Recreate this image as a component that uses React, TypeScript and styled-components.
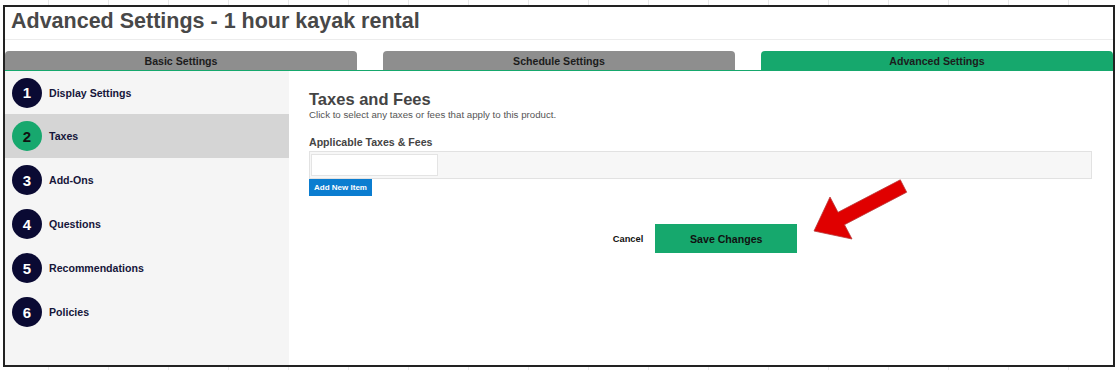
import React from 'react';
import styled, { createGlobalStyle } from 'styled-components';

const GlobalStyle = createGlobalStyle`
  html, body {
    margin: 0;
    padding: 0;
  }
  body {
    font-family: "Liberation Sans", Arial, sans-serif;
    background-color: #fff;
    background-image: repeating-linear-gradient(
      90deg,
      transparent 0 48px,
      #e9e9e9 48px 49px,
      transparent 49px 60px
    );
  }
`;

const Page = styled.div`
  padding: 5px 0 0 3px;
`;

const Frame = styled.div`
  position: relative;
  width: 1108px;
  height: 358px;
  border: 2px solid #222;
  background: #fff;
  display: flex;
  flex-direction: column;
  overflow: hidden;
`;

const Header = styled.div`
  padding: 2px 6px 5px;
  border-bottom: 1px solid #ececec;
`;

const Title = styled.h1`
  margin: 0;
  font-size: 21.5px;
  line-height: 25px;
  font-weight: bold;
  color: #484848;
`;

const Tabs = styled.div`
  display: flex;
  gap: 26px;
  margin-top: 11px;
  border-bottom: 1px solid #16a86d;
`;

const Tab = styled.div<{ $active?: boolean }>`
  flex: 1;
  height: 19px;
  border-radius: 4px 4px 0 0;
  background: ${({ $active }) => ($active ? '#16a86d' : '#8e8e8e')};
  color: #1c1c1c;
  font-size: 10.6px;
  font-weight: bold;
  display: flex;
  align-items: center;
  justify-content: center;
`;

const Body = styled.div`
  flex: 1;
  display: flex;
  min-height: 0;
`;

const Sidebar = styled.div`
  width: 284px;
  background: #f5f5f5;
  display: flex;
  flex-direction: column;
`;

const Step = styled.div<{ $active?: boolean }>`
  height: 44px;
  display: flex;
  align-items: center;
  gap: 7px;
  padding-left: 7px;
  background: ${({ $active }) => ($active ? '#d5d5d5' : 'transparent')};

  &:first-child {
    height: 43px;
  }
`;

const StepNumber = styled.div<{ $active?: boolean }>`
  width: 30px;
  height: 30px;
  border-radius: 50%;
  background: ${({ $active }) => ($active ? '#17a86e' : '#0a0a33')};
  color: ${({ $active }) => ($active ? '#111' : '#fff')};
  font-size: 15px;
  font-weight: bold;
  display: flex;
  align-items: center;
  justify-content: center;
`;

const StepLabel = styled.span`
  font-size: 10.6px;
  font-weight: bold;
  color: #16163a;
`;

const Main = styled.div`
  flex: 1;
  padding: 19px 21px 0 20px;
`;

const SectionTitle = styled.h2`
  margin: 0;
  font-size: 16.5px;
  line-height: 19px;
  font-weight: bold;
  color: #444;
`;

const SectionHint = styled.p`
  margin: 0;
  font-size: 9.7px;
  line-height: 11px;
  color: #555;
`;

const FieldLabel = styled.div`
  margin: 16px 0 3px;
  font-size: 10.6px;
  line-height: 12px;
  font-weight: bold;
  color: #444;
`;

const PickerBox = styled.div`
  height: 24px;
  padding: 2px 1px 0;
  background: #f7f7f7;
  border: 1px solid #e2e2e2;
`;

const PickerInput = styled.input`
  display: block;
  box-sizing: border-box;
  width: 127px;
  height: 22px;
  margin: 0;
  border: 1px solid #e4e4e4;
  background: #fff;
  outline: none;
`;

const AddButton = styled.button`
  display: block;
  height: 17px;
  width: 63px;
  padding: 0;
  border: none;
  background: #0b7dd0;
  color: #fff;
  font-family: inherit;
  font-size: 8px;
  font-weight: bold;
`;

const Footer = styled.div`
  display: flex;
  align-items: center;
  justify-content: center;
  gap: 12px;
  margin-top: 28px;
  padding-left: 9px;
`;

const CancelLink = styled.span`
  font-size: 9.3px;
  font-weight: bold;
  color: #111;
`;

const SaveButton = styled.button`
  width: 142px;
  height: 29px;
  border: none;
  background: #16a86d;
  color: #111;
  font-family: inherit;
  font-size: 10.6px;
  font-weight: bold;
`;

const Arrow = styled.svg`
  position: absolute;
  left: 795px;
  top: 163px;
  width: 120px;
  height: 80px;
  overflow: visible;
`;

const steps = ['Display Settings', 'Taxes', 'Add-Ons', 'Questions', 'Recommendations', 'Policies'];

export default function App() {
  return (
    <Page>
      <GlobalStyle />
      <Frame>
        <Header>
          <Title>Advanced Settings - 1 hour kayak rental</Title>
        </Header>
        <Tabs>
          <Tab>Basic Settings</Tab>
          <Tab>Schedule Settings</Tab>
          <Tab $active>Advanced Settings</Tab>
        </Tabs>
        <Body>
          <Sidebar>
            {steps.map((label, i) => (
              <Step key={label} $active={i === 1}>
                <StepNumber $active={i === 1}>{i + 1}</StepNumber>
                <StepLabel>{label}</StepLabel>
              </Step>
            ))}
          </Sidebar>
          <Main>
            <SectionTitle>Taxes and Fees</SectionTitle>
            <SectionHint>Click to select any taxes or fees that apply to this product.</SectionHint>
            <FieldLabel>Applicable Taxes &amp; Fees</FieldLabel>
            <PickerBox>
              <PickerInput />
            </PickerBox>
            <AddButton>Add New Item</AddButton>
            <Footer>
              <CancelLink>Cancel</CancelLink>
              <SaveButton>Save Changes</SaveButton>
            </Footer>
          </Main>
        </Body>
        <Arrow viewBox="0 0 120 80">
          <polygon
            points="14,61 30,27 38,42.3 100.3,9.8 106.7,22.2 44.5,54.7 52,69"
            fill="#e00000"
            stroke="#b83a3a"
            strokeWidth="0.8"
            strokeLinejoin="miter"
          />
        </Arrow>
      </Frame>
    </Page>
  );
}
